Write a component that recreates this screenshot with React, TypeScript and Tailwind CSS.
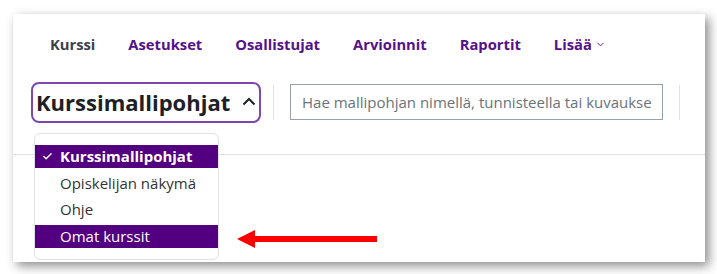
import { Check, ChevronDown } from "lucide-react"

const navItems = ["Asetukset", "Osallistujat", "Arvioinnit", "Raportit"]

export default function App() {
  return (
    <div className="w-[717px] h-[274px] bg-white pt-[14px] pl-[13px] font-['Open_Sans',sans-serif]">
      <div className="relative w-[692px] h-[248px] bg-white shadow-[4px_4px_10px_rgba(0,0,0,0.45)]">
        {/* top navigation */}
        <div className="flex items-center gap-[33px] pl-[37px] pt-[20px] h-[40px] text-[14.75px] font-bold leading-[20px]">
          <span className="text-[#3b3f4a]">Kurssi</span>
          {navItems.map((item) => (
            <span key={item} className="text-[#55118a]">
              {item}
            </span>
          ))}
          <span className="flex items-center gap-[3px] text-[#55118a]">
            Lisää
            <ChevronDown size={11} strokeWidth={2} />
          </span>
        </div>

        {/* tertiary navigation */}
        <div className="flex items-center h-[101px] pl-[18px] pb-[4px] border-b border-[#dee2e6]">
          <div className="flex items-center justify-between w-[230px] h-[41px] border-2 border-[#7d47ae] rounded-[8px] pl-[3px] pr-[3px]">
            <span className="text-[22px] font-bold text-[#1d2125] leading-none">Kurssimallipohjat</span>
            <svg width="14" height="9" viewBox="0 0 14 9" className="mb-[2px]">
              <polyline points="1.5,7.5 7,2 12.5,7.5" fill="none" stroke="#1d2125" strokeWidth="2" />
            </svg>
          </div>
          <div className="w-px h-[35px] bg-[#dee2e6] ml-[12px]" />
          <div className="w-[373px] h-[36px] ml-[16px] border border-[#9aa0a8] flex items-center px-[11px] overflow-hidden">
            <span className="whitespace-nowrap text-[15px] text-[#6a737b]">
              Hae mallipohjan nimellä, tunnisteella tai kuvaukse
            </span>
          </div>
          <div className="w-px h-[35px] bg-[#dee2e6] ml-[16px]" />
        </div>

        {/* dropdown menu */}
        <div className="absolute left-[21px] top-[119px] w-[185px] bg-white border border-[#dee2e6] rounded-[6px] py-[11px] flex flex-col gap-[3.5px] text-[15px]">
          <div className="h-[23px] bg-[#520080] text-white font-bold flex items-center pl-[7px]">
            <Check size={11} strokeWidth={3} className="mr-[7px]" />
            Kurssimallipohjat
          </div>
          <div className="h-[23px] text-[#333] flex items-center pl-[25px]">Opiskelijan näkymä</div>
          <div className="h-[23px] text-[#333] flex items-center pl-[25px]">Ohje</div>
          <div className="h-[23px] bg-[#520080] text-white flex items-center pl-[25px]">Omat kurssit</div>
        </div>

        {/* annotation arrow */}
        <svg className="absolute left-[224px] top-[215px]" width="141" height="20" viewBox="0 0 141 20">
          <polygon points="0,10 18,1 18,7 140,7 140,13 18,13 18,19" fill="#ff0000" />
        </svg>
      </div>
    </div>
  )
}
